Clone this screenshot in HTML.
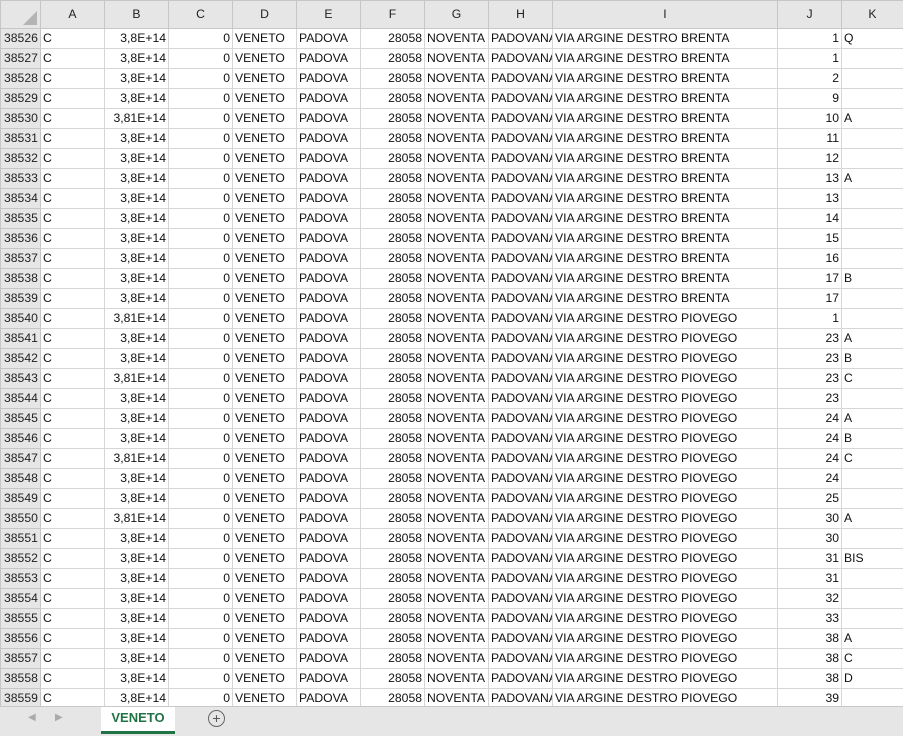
<!DOCTYPE html>
<html><head><meta charset="utf-8"><style>
body{margin:0;width:903px;height:735px;overflow:hidden;background:#fff;font-family:"Liberation Sans",sans-serif;font-size:12.2px;color:#111;position:relative}
table{border-collapse:collapse;table-layout:fixed;position:absolute;left:0;top:0;width:903px}
td,th{height:19px;padding:0 2px;border:1px solid #d6d6d6;white-space:nowrap;overflow:hidden;line-height:19px}
th{background:#e6e6e6;font-weight:normal;height:27px;border-color:#c6c6c6;color:#222}
td.h{background:#e6e6e6;border-color:#c6c6c6;text-align:left;padding-left:3px;color:#222}
.r{text-align:right}
.corner{position:relative}
.tri{position:absolute;right:3px;bottom:3px;width:0;height:0;border-left:14px solid transparent;border-bottom:14px solid #b4b4b4}
.bar{position:absolute;left:0;top:706px;width:903px;height:29px;background:#e6e6e6;border-top:1px solid #c8c8c8}
.tab{position:absolute;left:101px;top:0;width:74px;height:24px;background:#fff;border-bottom:3px solid #217346;color:#217346;font-weight:bold;text-align:center;line-height:22px;font-size:13px}
.arr{position:absolute;top:5px;color:#aaa;font-size:10px}
.plus{position:absolute;left:208px;top:3px;width:15px;height:15px;border:1px solid #666;border-radius:50%;text-align:center;line-height:15px;color:#555;font-size:14px}
</style></head><body>
<table>
<colgroup><col style="width:40px"><col style="width:64px"><col style="width:64px"><col style="width:64px"><col style="width:64px"><col style="width:64px"><col style="width:64px"><col style="width:64px"><col style="width:64px"><col style="width:225px"><col style="width:64px"><col style="width:62px"></colgroup>
<tr><th class="corner"><div class="tri"></div></th><th>A</th><th>B</th><th>C</th><th>D</th><th>E</th><th>F</th><th>G</th><th>H</th><th>I</th><th>J</th><th>K</th></tr>
<tr><td class="h">38526</td><td>C</td><td class="r">3,8E+14</td><td class="r">0</td><td>VENETO</td><td>PADOVA</td><td class="r">28058</td><td>NOVENTA</td><td>PADOVANA</td><td>VIA ARGINE DESTRO BRENTA</td><td class="r">1</td><td>Q</td></tr>
<tr><td class="h">38527</td><td>C</td><td class="r">3,8E+14</td><td class="r">0</td><td>VENETO</td><td>PADOVA</td><td class="r">28058</td><td>NOVENTA</td><td>PADOVANA</td><td>VIA ARGINE DESTRO BRENTA</td><td class="r">1</td><td></td></tr>
<tr><td class="h">38528</td><td>C</td><td class="r">3,8E+14</td><td class="r">0</td><td>VENETO</td><td>PADOVA</td><td class="r">28058</td><td>NOVENTA</td><td>PADOVANA</td><td>VIA ARGINE DESTRO BRENTA</td><td class="r">2</td><td></td></tr>
<tr><td class="h">38529</td><td>C</td><td class="r">3,8E+14</td><td class="r">0</td><td>VENETO</td><td>PADOVA</td><td class="r">28058</td><td>NOVENTA</td><td>PADOVANA</td><td>VIA ARGINE DESTRO BRENTA</td><td class="r">9</td><td></td></tr>
<tr><td class="h">38530</td><td>C</td><td class="r">3,81E+14</td><td class="r">0</td><td>VENETO</td><td>PADOVA</td><td class="r">28058</td><td>NOVENTA</td><td>PADOVANA</td><td>VIA ARGINE DESTRO BRENTA</td><td class="r">10</td><td>A</td></tr>
<tr><td class="h">38531</td><td>C</td><td class="r">3,8E+14</td><td class="r">0</td><td>VENETO</td><td>PADOVA</td><td class="r">28058</td><td>NOVENTA</td><td>PADOVANA</td><td>VIA ARGINE DESTRO BRENTA</td><td class="r">11</td><td></td></tr>
<tr><td class="h">38532</td><td>C</td><td class="r">3,8E+14</td><td class="r">0</td><td>VENETO</td><td>PADOVA</td><td class="r">28058</td><td>NOVENTA</td><td>PADOVANA</td><td>VIA ARGINE DESTRO BRENTA</td><td class="r">12</td><td></td></tr>
<tr><td class="h">38533</td><td>C</td><td class="r">3,8E+14</td><td class="r">0</td><td>VENETO</td><td>PADOVA</td><td class="r">28058</td><td>NOVENTA</td><td>PADOVANA</td><td>VIA ARGINE DESTRO BRENTA</td><td class="r">13</td><td>A</td></tr>
<tr><td class="h">38534</td><td>C</td><td class="r">3,8E+14</td><td class="r">0</td><td>VENETO</td><td>PADOVA</td><td class="r">28058</td><td>NOVENTA</td><td>PADOVANA</td><td>VIA ARGINE DESTRO BRENTA</td><td class="r">13</td><td></td></tr>
<tr><td class="h">38535</td><td>C</td><td class="r">3,8E+14</td><td class="r">0</td><td>VENETO</td><td>PADOVA</td><td class="r">28058</td><td>NOVENTA</td><td>PADOVANA</td><td>VIA ARGINE DESTRO BRENTA</td><td class="r">14</td><td></td></tr>
<tr><td class="h">38536</td><td>C</td><td class="r">3,8E+14</td><td class="r">0</td><td>VENETO</td><td>PADOVA</td><td class="r">28058</td><td>NOVENTA</td><td>PADOVANA</td><td>VIA ARGINE DESTRO BRENTA</td><td class="r">15</td><td></td></tr>
<tr><td class="h">38537</td><td>C</td><td class="r">3,8E+14</td><td class="r">0</td><td>VENETO</td><td>PADOVA</td><td class="r">28058</td><td>NOVENTA</td><td>PADOVANA</td><td>VIA ARGINE DESTRO BRENTA</td><td class="r">16</td><td></td></tr>
<tr><td class="h">38538</td><td>C</td><td class="r">3,8E+14</td><td class="r">0</td><td>VENETO</td><td>PADOVA</td><td class="r">28058</td><td>NOVENTA</td><td>PADOVANA</td><td>VIA ARGINE DESTRO BRENTA</td><td class="r">17</td><td>B</td></tr>
<tr><td class="h">38539</td><td>C</td><td class="r">3,8E+14</td><td class="r">0</td><td>VENETO</td><td>PADOVA</td><td class="r">28058</td><td>NOVENTA</td><td>PADOVANA</td><td>VIA ARGINE DESTRO BRENTA</td><td class="r">17</td><td></td></tr>
<tr><td class="h">38540</td><td>C</td><td class="r">3,81E+14</td><td class="r">0</td><td>VENETO</td><td>PADOVA</td><td class="r">28058</td><td>NOVENTA</td><td>PADOVANA</td><td>VIA ARGINE DESTRO PIOVEGO</td><td class="r">1</td><td></td></tr>
<tr><td class="h">38541</td><td>C</td><td class="r">3,8E+14</td><td class="r">0</td><td>VENETO</td><td>PADOVA</td><td class="r">28058</td><td>NOVENTA</td><td>PADOVANA</td><td>VIA ARGINE DESTRO PIOVEGO</td><td class="r">23</td><td>A</td></tr>
<tr><td class="h">38542</td><td>C</td><td class="r">3,8E+14</td><td class="r">0</td><td>VENETO</td><td>PADOVA</td><td class="r">28058</td><td>NOVENTA</td><td>PADOVANA</td><td>VIA ARGINE DESTRO PIOVEGO</td><td class="r">23</td><td>B</td></tr>
<tr><td class="h">38543</td><td>C</td><td class="r">3,81E+14</td><td class="r">0</td><td>VENETO</td><td>PADOVA</td><td class="r">28058</td><td>NOVENTA</td><td>PADOVANA</td><td>VIA ARGINE DESTRO PIOVEGO</td><td class="r">23</td><td>C</td></tr>
<tr><td class="h">38544</td><td>C</td><td class="r">3,8E+14</td><td class="r">0</td><td>VENETO</td><td>PADOVA</td><td class="r">28058</td><td>NOVENTA</td><td>PADOVANA</td><td>VIA ARGINE DESTRO PIOVEGO</td><td class="r">23</td><td></td></tr>
<tr><td class="h">38545</td><td>C</td><td class="r">3,8E+14</td><td class="r">0</td><td>VENETO</td><td>PADOVA</td><td class="r">28058</td><td>NOVENTA</td><td>PADOVANA</td><td>VIA ARGINE DESTRO PIOVEGO</td><td class="r">24</td><td>A</td></tr>
<tr><td class="h">38546</td><td>C</td><td class="r">3,8E+14</td><td class="r">0</td><td>VENETO</td><td>PADOVA</td><td class="r">28058</td><td>NOVENTA</td><td>PADOVANA</td><td>VIA ARGINE DESTRO PIOVEGO</td><td class="r">24</td><td>B</td></tr>
<tr><td class="h">38547</td><td>C</td><td class="r">3,81E+14</td><td class="r">0</td><td>VENETO</td><td>PADOVA</td><td class="r">28058</td><td>NOVENTA</td><td>PADOVANA</td><td>VIA ARGINE DESTRO PIOVEGO</td><td class="r">24</td><td>C</td></tr>
<tr><td class="h">38548</td><td>C</td><td class="r">3,8E+14</td><td class="r">0</td><td>VENETO</td><td>PADOVA</td><td class="r">28058</td><td>NOVENTA</td><td>PADOVANA</td><td>VIA ARGINE DESTRO PIOVEGO</td><td class="r">24</td><td></td></tr>
<tr><td class="h">38549</td><td>C</td><td class="r">3,8E+14</td><td class="r">0</td><td>VENETO</td><td>PADOVA</td><td class="r">28058</td><td>NOVENTA</td><td>PADOVANA</td><td>VIA ARGINE DESTRO PIOVEGO</td><td class="r">25</td><td></td></tr>
<tr><td class="h">38550</td><td>C</td><td class="r">3,81E+14</td><td class="r">0</td><td>VENETO</td><td>PADOVA</td><td class="r">28058</td><td>NOVENTA</td><td>PADOVANA</td><td>VIA ARGINE DESTRO PIOVEGO</td><td class="r">30</td><td>A</td></tr>
<tr><td class="h">38551</td><td>C</td><td class="r">3,8E+14</td><td class="r">0</td><td>VENETO</td><td>PADOVA</td><td class="r">28058</td><td>NOVENTA</td><td>PADOVANA</td><td>VIA ARGINE DESTRO PIOVEGO</td><td class="r">30</td><td></td></tr>
<tr><td class="h">38552</td><td>C</td><td class="r">3,8E+14</td><td class="r">0</td><td>VENETO</td><td>PADOVA</td><td class="r">28058</td><td>NOVENTA</td><td>PADOVANA</td><td>VIA ARGINE DESTRO PIOVEGO</td><td class="r">31</td><td>BIS</td></tr>
<tr><td class="h">38553</td><td>C</td><td class="r">3,8E+14</td><td class="r">0</td><td>VENETO</td><td>PADOVA</td><td class="r">28058</td><td>NOVENTA</td><td>PADOVANA</td><td>VIA ARGINE DESTRO PIOVEGO</td><td class="r">31</td><td></td></tr>
<tr><td class="h">38554</td><td>C</td><td class="r">3,8E+14</td><td class="r">0</td><td>VENETO</td><td>PADOVA</td><td class="r">28058</td><td>NOVENTA</td><td>PADOVANA</td><td>VIA ARGINE DESTRO PIOVEGO</td><td class="r">32</td><td></td></tr>
<tr><td class="h">38555</td><td>C</td><td class="r">3,8E+14</td><td class="r">0</td><td>VENETO</td><td>PADOVA</td><td class="r">28058</td><td>NOVENTA</td><td>PADOVANA</td><td>VIA ARGINE DESTRO PIOVEGO</td><td class="r">33</td><td></td></tr>
<tr><td class="h">38556</td><td>C</td><td class="r">3,8E+14</td><td class="r">0</td><td>VENETO</td><td>PADOVA</td><td class="r">28058</td><td>NOVENTA</td><td>PADOVANA</td><td>VIA ARGINE DESTRO PIOVEGO</td><td class="r">38</td><td>A</td></tr>
<tr><td class="h">38557</td><td>C</td><td class="r">3,8E+14</td><td class="r">0</td><td>VENETO</td><td>PADOVA</td><td class="r">28058</td><td>NOVENTA</td><td>PADOVANA</td><td>VIA ARGINE DESTRO PIOVEGO</td><td class="r">38</td><td>C</td></tr>
<tr><td class="h">38558</td><td>C</td><td class="r">3,8E+14</td><td class="r">0</td><td>VENETO</td><td>PADOVA</td><td class="r">28058</td><td>NOVENTA</td><td>PADOVANA</td><td>VIA ARGINE DESTRO PIOVEGO</td><td class="r">38</td><td>D</td></tr>
<tr><td class="h">38559</td><td>C</td><td class="r">3,8E+14</td><td class="r">0</td><td>VENETO</td><td>PADOVA</td><td class="r">28058</td><td>NOVENTA</td><td>PADOVANA</td><td>VIA ARGINE DESTRO PIOVEGO</td><td class="r">39</td><td></td></tr>
</table>
<div class="bar">
<span class="arr" style="left:28px">&#9664;</span><span class="arr" style="left:55px">&#9654;</span>
<div class="tab">VENETO</div>
<div class="plus">+</div>
</div>
</body></html>
